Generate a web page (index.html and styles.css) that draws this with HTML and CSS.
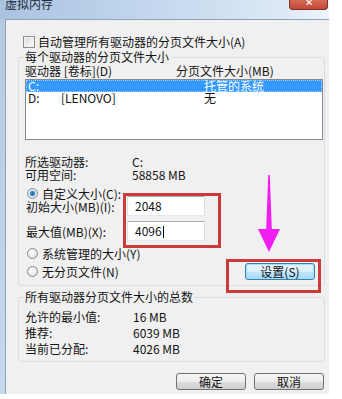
FILE: index.html
```html
<!DOCTYPE html>
<html lang="zh-CN">
<head>
    <meta charset="UTF-8" />
    <meta name="viewport" content="width=device-width, initial-scale=1.0" />
    <title>虚拟内存</title>
    <link rel="stylesheet" href="styles.css">
</head>
<body>
    <div class="window">
        <div class="titlebar">
            <span class="title">虚拟内存</span>
            <span class="close">✕</span>
        </div>

        <div class="client">
            <div class="check-row"><span class="checkbox"></span>自动管理所有驱动器的分页文件大小(A)</div>

            <fieldset class="group group-drives">
                <legend>每个驱动器的分页文件大小</legend>
                <div class="list-head">
                    <span class="head-drive">驱动器 [卷标](D)</span>
                    <span>分页文件大小(MB)</span>
                </div>
                <div class="listbox">
                    <div class="list-row selected">
                        <span class="col-drive">C:</span>
                        <span>托管的系统</span>
                    </div>
                    <div class="list-row">
                        <span class="col-drive"><span class="drive-letter">D:</span>[LENOVO]</span>
                        <span>无</span>
                    </div>
                </div>

                <div class="info">
                    <div class="info-row"><span class="info-label">所选驱动器:</span><span>C:</span></div>
                    <div class="info-row"><span class="info-label">可用空间:</span><span>58858 MB</span></div>
                </div>

                <div class="radio-row first"><span class="radio checked"></span>自定义大小(C):</div>
                <div class="size-grid">
                    <span>初始大小(MB)(I):</span>
                    <div class="field">2048</div>
                    <span>最大值(MB)(X):</span>
                    <div class="field">4096<span class="caret"></span></div>
                </div>
                <div class="radio-row system"><span class="radio"></span>系统管理的大小(Y)</div>
                <div class="radio-row last">
                    <span class="radio"></span>无分页文件(N)
                    <button class="btn btn-set">设置(S)</button>
                </div>
            </fieldset>

            <fieldset class="group group-total">
                <legend>所有驱动器分页文件大小的总数</legend>
                <div class="totals">
                    <div class="total-row"><span class="total-label">允许的最小值:</span><span>16 MB</span></div>
                    <div class="total-row"><span class="total-label">推荐:</span><span>6039 MB</span></div>
                    <div class="total-row"><span class="total-label">当前已分配:</span><span>4026 MB</span></div>
                </div>
            </fieldset>

            <div class="actions">
                <button class="btn">确定</button>
                <button class="btn">取消</button>
            </div>
        </div>

        <!-- annotations drawn over the dialog -->
        <div class="mark mark-fields"></div>
        <div class="mark mark-button"></div>
        <svg class="arrow" width="26" height="82" viewBox="0 0 26 82">
            <path d="M12.2 3 L13.8 3 L15.8 57 L24 57 L13 80 L2 57 L10.2 57 Z" fill="#f01ef0" />
        </svg>
    </div>
</body>
</html>
```

FILE: styles.css
```css
* {
    box-sizing: border-box;
}

body {
    margin: 0;
    background-color: #fff;
    font-family: "Noto Sans CJK SC", "Noto Sans", sans-serif;
    font-size: 12px;
    color: #141414;
}

.window {
    position: relative;
    width: 329px;
    height: 394px;
    display: flex;
    flex-direction: column;
    background: linear-gradient(180deg, #b3cae4, #c6d8ec);
}

.titlebar {
    height: 19px;
    display: flex;
    align-items: flex-start;
    background: linear-gradient(90deg, #a9c3e0 0%, #c2d7ee 45%, #dce8f5 85%, #eef4fb 100%);
    overflow: hidden;
}

.title {
    margin: -3px 0 0 5px;
    font-size: 12px;
    line-height: 14px;
    color: #1f2b3a;
}

.close {
    margin-left: auto;
    margin-right: 1px;
    width: 39px;
    height: 10px;
    border: 1px solid #7b2f28;
    border-top: none;
    border-radius: 0 0 4px 4px;
    background: linear-gradient(180deg, #d66a55, #c4473a);
    color: #fff;
    font-size: 10px;
    line-height: 4px;
    text-align: center;
    overflow: hidden;
}

.client {
    flex: 1;
    margin-left: 5px;
    padding-top: 15px;
    border-left: 1px solid #8fa3bb;
    border-top: 1px solid #8ea2ba;
    background-color: #f0f0f0;
}

.check-row {
    display: flex;
    align-items: center;
    height: 13px;
    margin-left: 17px;
    line-height: 13px;
}

.checkbox {
    width: 12px;
    height: 12px;
    margin-right: 3px;
    border: 1px solid #8e8f8f;
    background: linear-gradient(135deg, #dcdcdc, #fbfbfb);
    box-shadow: inset 0 0 0 1px #f4f4f4;
}

.group {
    width: 307px;
    margin: 0 0 0 12px;
    padding: 0 1px 5px 6px;
    border: 1px solid #d5dfe5;
    border-radius: 3px;
    min-width: 0;
}

.group legend {
    margin-left: -1px;
    padding: 0 1px;
    font-size: 12px;
    line-height: 12px;
}

.group-drives {
    margin-top: 3px;
}

.list-head {
    display: flex;
    margin-top: 1px;
    line-height: 13px;
}

.head-drive {
    width: 151px;
}

.listbox {
    height: 61px;
    margin-top: 2px;
    border: 1px solid #828790;
    background-color: #fff;
}

.list-row {
    display: flex;
    height: 12px;
    padding-left: 2px;
    line-height: 12px;
}

.list-row.selected {
    background-color: #3399ff;
    color: #fff;
    outline: 1px dotted #9fd0ff;
    outline-offset: -1px;
}

.col-drive {
    width: 176px;
}

.drive-letter {
    display: inline-block;
    width: 33px;
}

.info {
    margin-top: 15px;
}

.info-row,
.total-row {
    display: flex;
    line-height: 13px;
}

.info-label {
    width: 107px;
}

.radio-row {
    display: flex;
    align-items: center;
    height: 13px;
    line-height: 13px;
}

.radio-row.first {
    margin-top: 6px;
}

.radio-row.system {
    margin-top: 6px;
}

.radio-row.last {
    height: 17px;
    margin-top: 3px;
}

.radio {
    width: 11px;
    height: 11px;
    margin: 0 4px 0 2px;
    border: 1px solid #8a8a8a;
    border-radius: 50%;
    background: radial-gradient(circle at 40% 40%, #fdfdfd, #d8d8d8);
}

.radio.checked {
    background: radial-gradient(circle, #1f5d8a 0, #3f8cc0 2px, #bfe0f2 3px, #f2f2f2 5px);
}

.size-grid {
    display: grid;
    grid-template-columns: 102px 78px;
    grid-auto-rows: 20px;
    row-gap: 5px;
    align-items: center;
    margin-top: -4px;
}

.size-grid > span {
    padding-left: 1px;
}

.field {
    height: 20px;
    padding-left: 7px;
    border: 1px solid;
    border-color: #abadb3 #dbdfe6 #e3e9ef #e2e3ea;
    background-color: #fff;
    line-height: 18px;
}

.caret {
    display: inline-block;
    width: 1px;
    height: 12px;
    margin-left: 1px;
    vertical-align: -2px;
    background-color: #000;
}

.btn {
    width: 70px;
    height: 17px;
    padding: 0;
    border: 1px solid #707070;
    border-radius: 3px;
    background: linear-gradient(180deg, #f6f6f6 0%, #ececec 50%, #dedede 51%, #d0d0d0 100%);
    font-family: inherit;
    font-size: 12px;
    line-height: 15px;
    color: #141414;
}

.btn-set {
    margin-left: auto;
    margin-right: 8px;
    border-color: #3c7fb1;
    background: linear-gradient(180deg, #eaf6fd 0%, #d9f0fc 50%, #bee6fd 51%, #a7d9f5 100%);
    box-shadow: inset 0 0 1px 1px #9be0fb;
}

.group-total {
    margin-top: 5px;
    padding-bottom: 4px;
}

.totals {
    margin-top: 6px;
}

.total-row {
    line-height: 16px;
}

.total-label {
    width: 108px;
}

.actions {
    display: flex;
    justify-content: flex-end;
    gap: 8px;
    margin-top: 11px;
    padding-right: 5px;
}

.mark {
    position: absolute;
    border: 3px solid #cc3a3c;
}

.mark-fields {
    left: 123px;
    top: 193px;
    width: 98px;
    height: 55px;
}

.mark-button {
    left: 226px;
    top: 259px;
    width: 95px;
    height: 34px;
}

.arrow {
    position: absolute;
    left: 256px;
    top: 172px;
}
```
